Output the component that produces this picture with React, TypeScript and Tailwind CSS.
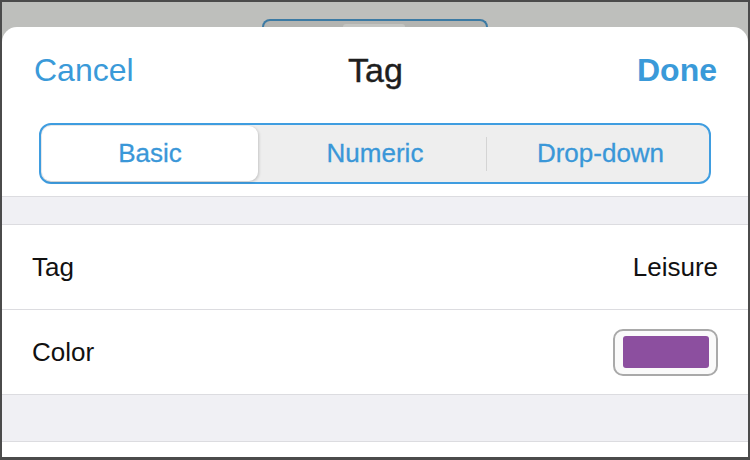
import React, { useState } from 'react';

const tabs = ['Basic', 'Numeric', 'Drop-down'];

function App() {
  const [active, setActive] = useState(0);

  return (
    <div
      className="w-[750px] h-[460px] bg-[#bebfbc] border-[#4b4b4b] border-t-2 border-l-2 border-r-2 border-b-[3px] flex flex-col overflow-hidden"
      style={{ fontFamily: '"Liberation Sans", Arial, sans-serif' }}
    >
      {/* dimmed screen behind the sheet */}
      <div className="h-[25px] shrink-0 flex items-end justify-center">
        <div className="w-[226px] h-[8px] rounded-t-[12px] border-t-2 border-x-2 border-[#3c7aa3] bg-[#b3b4b1] flex items-end pl-[79px]">
          <div className="w-[62px] h-[3px] rounded-t-[6px] bg-[#c4c5c2]" />
        </div>
      </div>

      <div className="flex-1 bg-white rounded-t-[15px] flex flex-col">
        {/* nav bar */}
        <div className="h-[86px] shrink-0 grid grid-cols-[1fr_auto_1fr] items-center pl-[32px] pr-[31px] leading-none">
          <button className="justify-self-start text-[32px] text-[#3a9ad9]">Cancel</button>
          <div className="text-[34px] text-[#1e1e1e] [-webkit-text-stroke:0.4px]">Tag</div>
          <button className="justify-self-end text-[32px] text-[#3a9ad9] font-bold">Done</button>
        </div>

        {/* segmented control */}
        <div className="mt-[10px] mx-[37px] h-[61px] shrink-0 rounded-[12px] border-2 border-[#3f9de0] bg-[#eeeeee] grid grid-cols-3 p-[1px]">
          {tabs.map((t, i) => (
            <div key={t} className={'flex items-center ' + (i === 0 ? 'pr-[6px]' : '')}>
              {i === 2 && <div className="w-px h-[34px] bg-[#d4d4d4]" />}
              <button
                onClick={() => setActive(i)}
                className={
                  'flex-1 h-full flex items-center justify-center text-[26px] text-[#3a97d8] rounded-[9px] [-webkit-text-stroke:0.3px] ' +
                  (i === 2 ? 'pl-[6px] ' : '') +
                  (active === i ? 'bg-white shadow-[1px_1px_3px_rgba(0,0,0,0.18)]' : '')
                }
              >
                {t}
              </button>
            </div>
          ))}
        </div>

        <div className="h-[12px] shrink-0" />

        {/* table */}
        <div className="border-t border-[#dcdce0] bg-[#f0f0f4] h-[28px] shrink-0" />
        <div className="border-t border-[#dcdce0] h-[85px] shrink-0 flex items-center justify-between pl-[30px] pr-[30px] text-[26px] text-[#111]">
          <span>Tag</span>
          <span>Leisure</span>
        </div>
        <div className="border-t border-[#dcdce0] h-[85px] shrink-0 flex items-center justify-between pl-[30px] pr-[30px] text-[26px] text-[#111]">
          <span>Color</span>
          <div className="w-[105px] h-[47px] rounded-[10px] border-2 border-[#a9a9a9] bg-[#fafafa] flex items-center justify-center">
            <div className="w-[86px] h-[32px] rounded-[3px] bg-[#8c4f9f]" />
          </div>
        </div>
        <div className="border-t border-[#dcdce0] bg-[#f0f0f4] h-[47px] shrink-0" />
        <div className="border-t border-[#dcdce0] flex-1" />
      </div>
    </div>
  );
}

export default App;
